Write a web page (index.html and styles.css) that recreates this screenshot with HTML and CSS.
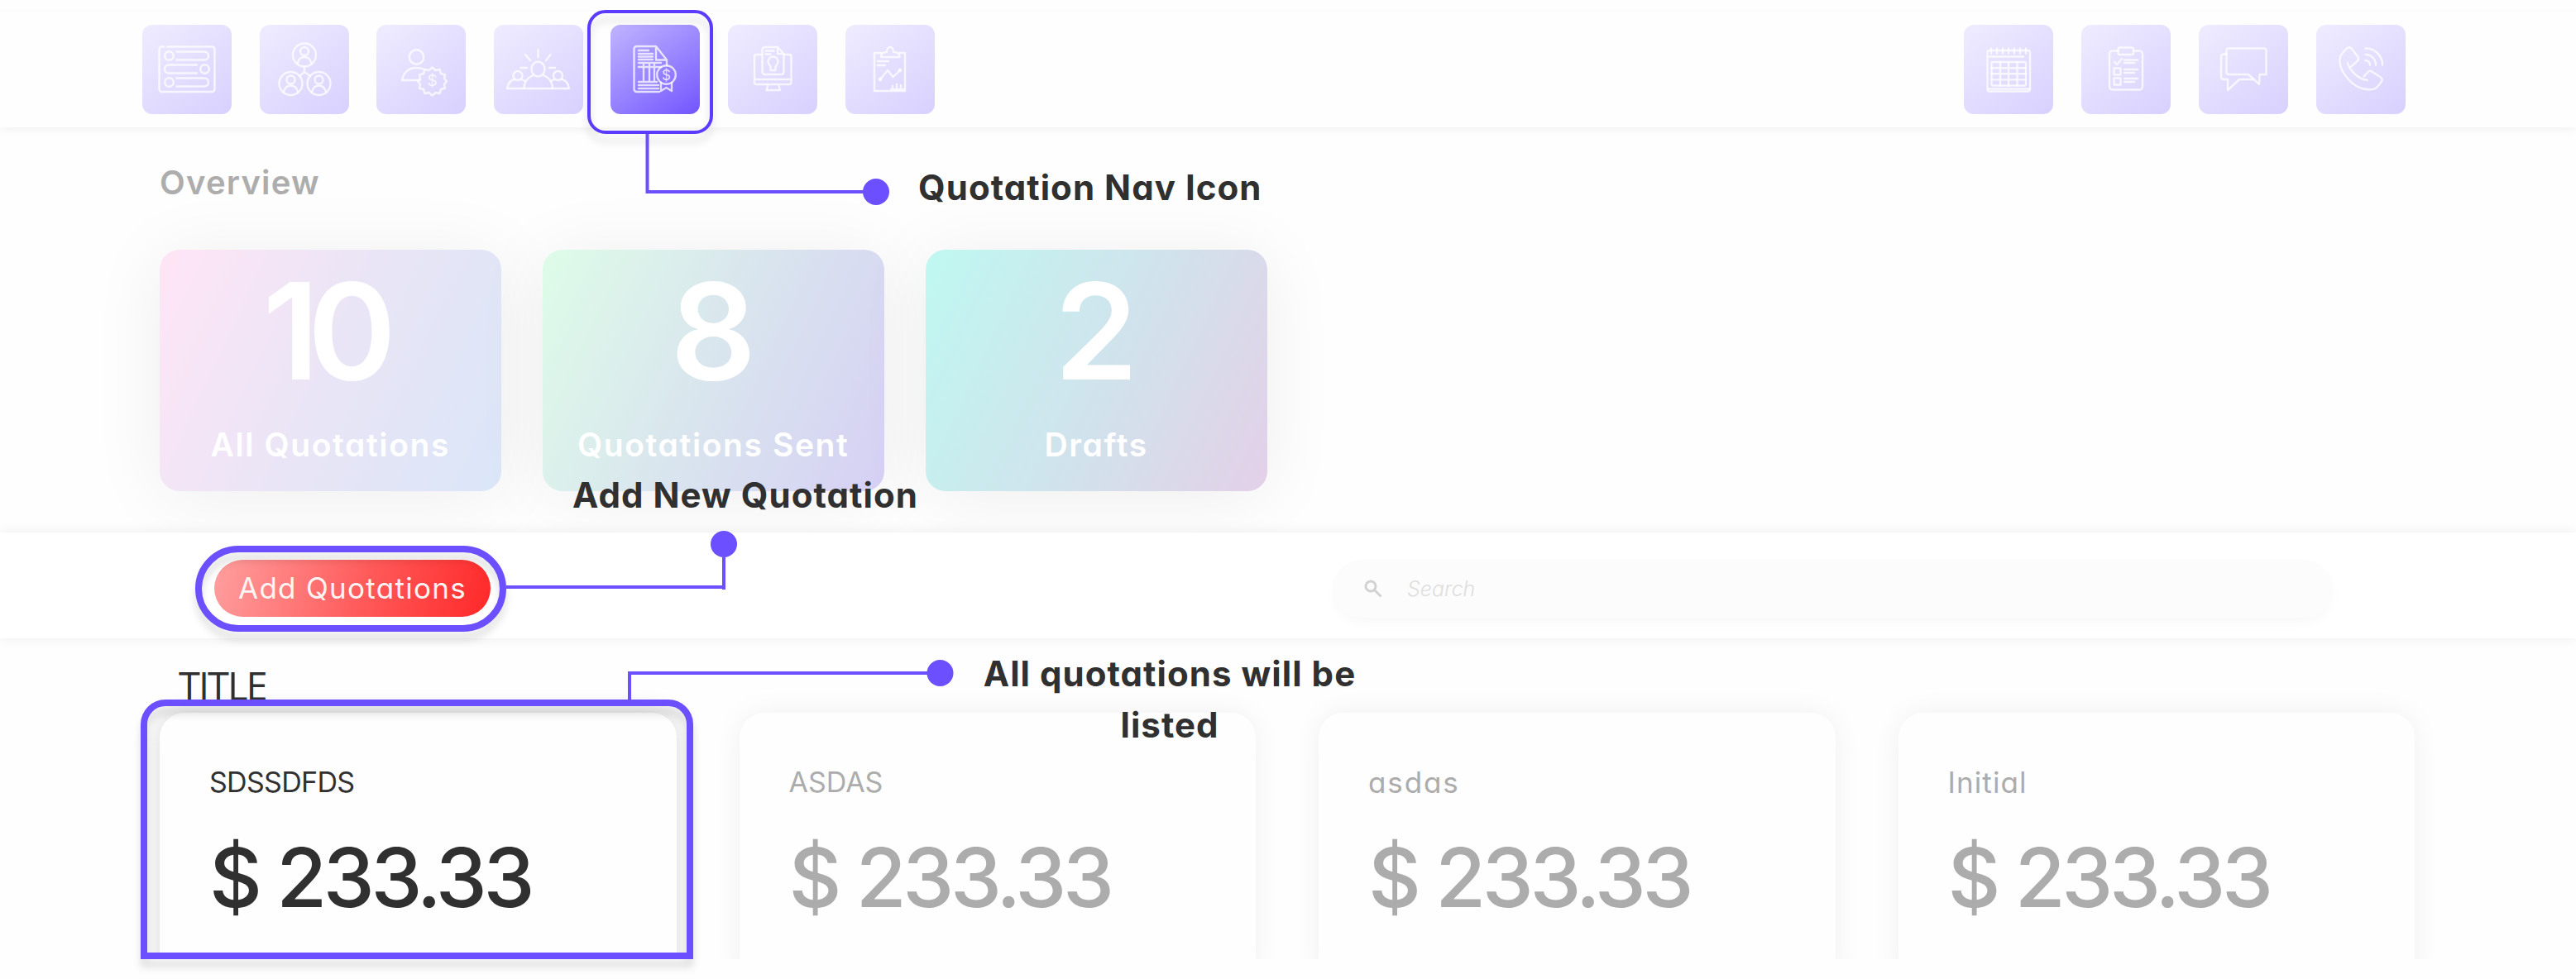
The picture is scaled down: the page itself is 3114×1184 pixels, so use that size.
FILE: index.html
```html
<!DOCTYPE html>
<html lang="en">
<head>
<meta charset="utf-8">
<title>Quotations</title>
<link rel="stylesheet" href="styles.css">
</head>
<body>
<div class="page">
  <nav class="nav">
    <div class="nav-group">
      <a class="tile"><svg viewBox="0 0 108 108"><path d="M26 26.500H23.500a3 3 0 0 0-3 3V78a3 3 0 0 0 3 3h61a3 3 0 0 0 3-3V29.500a3 3 0 0 0-3-3H30"/><circle cx="32.500" cy="37.500" r="5.300"/><path d="M41.500 32.500H75a5 5 0 0 1 0 10H41.500M66 48.500H32a5 5 0 0 0 0 10h34M41.500 64.500H75a5 5 0 0 1 0 10H41.500"/><circle cx="75.500" cy="53.500" r="5.300"/><circle cx="32.500" cy="69.500" r="5.300"/></svg></a>
      <a class="tile"><svg viewBox="0 0 108 108"><circle cx="54" cy="36.500" r="14"/><circle cx="54" cy="32" r="5"/><path d="M45.500 47c1-5 4-8 8.500-8s7.500 3 8.500 8"/><g transform="translate(-16.500 34.500)"><circle cx="54" cy="36.500" r="14"/><circle cx="54" cy="32" r="5"/><path d="M45.500 47c1-5 4-8 8.500-8s7.500 3 8.500 8"/></g><g transform="translate(17.500 34.500)"><circle cx="54" cy="36.500" r="14"/><circle cx="54" cy="32" r="5"/><path d="M45.500 47c1-5 4-8 8.500-8s7.500 3 8.500 8"/></g><path d="M54 50.500V57l-6 5M54 57l7 5"/></svg></a>
      <a class="tile"><svg viewBox="0 0 108 108"><circle cx="48.500" cy="39" r="8.700"/><path d="M53 67H31c1.500-9 8-15 17-15 4 0 7 .5 10 2"/><path d="M67.500 51.500l4 3.500 5-1 1.500 5 5 1.500-1 4.500 3 3-3 4 1 4.500-5 1.500-1.500 5-5-1-4 3.500-4-3.500-5 1-1.500-5-5-1.500 1-4.500-3-4 3-3-1-4.500 5-1.500 1.500-5 5 1z"/><text x="67.500" y="74" font-size="19">$</text></svg></a>
      <a class="tile"><svg viewBox="0 0 108 108"><ellipse cx="53.500" cy="53.500" rx="8" ry="9"/><path d="M36.500 77c0-8 4-13 11-16M71 77c0-8-4-13-11-16"/><circle cx="29" cy="61.500" r="5.500"/><circle cx="77.500" cy="61.500" r="5.500"/><path d="M16 77c1-6 4-10 9-11M33 66l5 2M91 77c-1-6-4-10-9-11M73.500 66l-5 2M16 77h75M53.500 30v9M38 36l6 7M68.500 36l-5.500 7M32.500 52H40M67 52h7"/></svg></a>
      <a class="tile tile-active"><svg viewBox="0 0 108 108"><path d="M59 81H31.500a3 3 0 0 1-3-3V29a3 3 0 0 1 3-3H55l13 16.500V49M55 26v16.500h13M34 31h12M34 35h17M34 38.500h17M34 42h17M34 46h27M34 51h27M34 69h22M34 73h24M34 77h24M40 46v23M47 46v23M53 46v23"/><circle cx="67.500" cy="60.500" r="11.300"/><path d="M61 70v10l6.500-4 6.500 4V70"/><text x="67.500" y="66.500" font-size="17">$</text></svg></a>
      <a class="tile"><svg viewBox="0 0 108 108"><path d="M41 36h-6.500a2.500 2.500 0 0 0-2.500 2.500v31a2.500 2.500 0 0 0 2.500 2.500H74a2.500 2.500 0 0 0 2.500-2.500v-31A2.500 2.500 0 0 0 74 36h-6.500M32 66h44.500M48.500 72l-2 7H63l-2-7"/><path d="M41.500 30a3 3 0 0 1 3-3H60l7.500 8v22a3 3 0 0 1-3 3h-20a3 3 0 0 1-3-3zM60 27v8h7.500M45.500 31.500h10M45.500 35.500h6"/><path d="M51.500 51c0-2-3-3-3-6.500a6 6 0 0 1 12 0c0 3.500-3 4.500-3 6.500v4h-6z"/></svg></a>
      <a class="tile"><svg viewBox="0 0 108 108"><path d="M43 34h-8v46h37V34h-7"/><path d="M43 39c0-4 2.500-6 7-6 0-8 8-8 8 0 4.500 0 7.500 2 7.500 6zM39 44h13M39 49h9M42 66l9-11 6.500 8L66 55M55 78h15M57 78v-4M62 78v-6M67 78v-5"/><circle cx="42" cy="66" r="1.200"/><circle cx="66" cy="55" r="1.200"/></svg></a>
    </div>
    <div class="nav-group">
      <a class="tile"><svg viewBox="0 0 108 108"><rect x="28.500" y="31" width="51.500" height="49.500" rx="2.500"/><path d="M31 38.500h41M30 77.500h49M33 28.500v6M40 28.500v6M47 28.500v6M54 28.500v6M61 28.500v6M68 28.500v6M75 28.500v6"/><rect x="33.500" y="45" width="41.500" height="28.500" rx="1.500"/><path d="M33.500 52.200H75M33.500 59.300H75M33.500 66.400H75M44 45v28.500M54 45v28.500M64.500 45v28.500"/></svg></a>
      <a class="tile"><svg viewBox="0 0 108 108"><path d="M44.500 31.500h-7a3.500 3.500 0 0 0-3.500 3.500v40a3.500 3.500 0 0 0 3.500 3.500h33A3.500 3.500 0 0 0 74 75V35a3.500 3.500 0 0 0-3.500-3.500H63"/><rect x="44.500" y="27.500" width="18.500" height="8.500" rx="2"/><path d="M40 45l3 3 6-7M52 42.500h16M52 46h12M52 54h16M52 58h12M52 65h16M52 69h12"/><rect x="39.500" y="52.500" width="8" height="8"/><rect x="39.500" y="64.500" width="8" height="8"/></svg></a>
      <a class="tile"><svg viewBox="0 0 108 108"><path d="M60 60H36a2.500 2.500 0 0 1-2.500-2.500V31a2.500 2.500 0 0 1 2.500-2.500h43a2.500 2.500 0 0 1 2.500 2.500v29H73.500L73 72 60 60"/><path d="M33.500 35.500H30a3 3 0 0 0-3 3V63a3 3 0 0 0 3 3h5v13l14-13h17"/></svg></a>
      <a class="tile"><svg viewBox="0 0 108 108"><path d="M38 46c2 9 13 20 24 21M41.500 51l8-7c2-1.500 2-3 1-5L43 29c-1.500-2-4-2.500-6-.5l-6 6.500c-2 2.500-3 6-2.500 11 1.500 13 16 29 29 31.500 5 1 11 1 14-.5 2-1.500 5-5 7.500-8.500 1.500-2 .5-4-1-5L68 57c-2-1.500-4-1.500-5.500 0l-5 5.500"/><path d="M59.500 28.500a20 20 0 0 1 20.500 20M59.500 36a12.500 12.500 0 0 1 12.500 12.500M59.500 43a5.500 5.500 0 0 1 5.500 5.500"/></svg></a>
    </div>
  </nav>

  <section class="overview">
    <h2 class="overview-title">Overview</h2>
    <div class="stats">
      <div class="stat stat-all"><b>10</b><em>All Quotations</em></div>
      <div class="stat stat-sent"><b>8</b><em>Quotations Sent</em></div>
      <div class="stat stat-draft"><b>2</b><em>Drafts</em></div>
    </div>
  </section>

  <section class="toolbar">
    <button class="add">Add Quotations</button>
    <label class="search">
      <svg class="search-icon" viewBox="0 0 22 22"><circle cx="8" cy="8" r="6"/><path d="M12.500 12.500l8 8"/></svg>
      <span>Search</span>
    </label>
  </section>

  <section class="list">
    <h3 class="list-title">TITLE</h3>
    <div class="quotes">
      <article class="quote quote-first"><p class="name name-caps">SDSSDFDS</p><p class="price">$ 233.33</p></article>
      <article class="quote"><p class="name name-short">ASDAS</p><p class="price">$ 233.33</p></article>
      <article class="quote"><p class="name name-lower">asdas</p><p class="price">$ 233.33</p></article>
      <article class="quote"><p class="name name-mixed">Initial</p><p class="price">$ 233.33</p></article>
    </div>
  </section>

  <div class="frame frame-nav"></div>
  <div class="frame frame-add"></div>
  <div class="frame frame-quote"></div>
  <svg class="connectors" viewBox="0 0 3114 1184">
    <path d="M782.500 162V232H1050M612 710H875V674M875 710v3M761 846V814H1130"/>
    <circle cx="1059" cy="232" r="16"/><circle cx="875" cy="658" r="16"/><circle cx="1136.500" cy="814" r="16"/>
  </svg>
  <p class="note note-nav">Quotation Nav Icon</p>
  <p class="note note-add">Add New Quotation</p>
  <p class="note note-list">All quotations will be<br>listed</p>
</div>
</body>
</html>
```
FILE: styles.css
```css
* { box-sizing: border-box; }
body { margin: 0; background: #fefefe; font-family: Inter, "Noto Sans", sans-serif; font-feature-settings: "cv11"; color: #303030; }
h2, h3, p { margin: 0; font-weight: 400; }
.page { position: relative; width: 3114px; height: 1184px; overflow: hidden; display: flex; flex-direction: column; }

.nav { height: 154px; flex: none; display: flex; justify-content: space-between; padding: 30px 206px 0 172px; box-shadow: 0 2px 12px rgba(0, 0, 0, .06); background: linear-gradient(#fefefe 12px, #fbfbfb 12px, #fbfbfb 14px, #fefefe 14px); }
.nav-group { display: flex; gap: 33.600px; }
.nav-group + .nav-group { gap: 34px; }
.tile { width: 108px; height: 107.500px; border-radius: 12px; background: linear-gradient(145deg, #efecff, #e3defe 50%, #d8d0ff); }
.tile-active { background: linear-gradient(145deg, #c1b4ff, #9a86ff 50%, #7355ff); }
.tile svg { display: block; width: 108px; height: 108px; fill: none; stroke: #fff; stroke-opacity: .75; stroke-width: 2.400; stroke-linejoin: round; stroke-linecap: round; }
.tile text { fill: #fff; fill-opacity: .8; stroke: none; text-anchor: middle; font-family: Inter, sans-serif; }

.overview { height: 490px; flex: none; padding: 0 193px; }
.overview-title { height: 148px; padding-top: 42px; font-size: 40px; line-height: 50px; font-weight: 600; letter-spacing: 1.200px; color: #adadad; }
.stats { display: flex; gap: 50.500px; }
.stat { width: 412.500px; height: 292px; border-radius: 24px; display: flex; flex-direction: column; align-items: center; color: #fff; box-shadow: 0 6px 90px rgba(0, 0, 0, .065); }
.stat b { height: 196px; line-height: 196px; font-size: 162px; font-weight: 600; }
.stat em { font-style: normal; font-size: 39px; font-weight: 600; line-height: 80px; letter-spacing: 1.600px; }
.stat-all { background: linear-gradient(115deg, #ffe5f6, #e9e5f6 50%, #dae6f8); }
.stat-all b { letter-spacing: -14px; padding-right: 16px; }
.stat-sent { background: linear-gradient(115deg, #defce8, #d9e5ee 50%, #d6d0f4); }
.stat-draft { background: linear-gradient(115deg, #bff8f1, #d1e2ec 55%, #e3d0e8); }

.toolbar { position: relative; height: 128px; flex: none; display: flex; justify-content: space-between; padding: 33px 294px 0 259px; background: rgba(255, 255, 255, .8); box-shadow: 0 0 16px rgba(0, 0, 0, .07); }
.add { width: 334px; height: 69px; border: 0; padding: 0; border-radius: 35px; color: #fff3f3; font: 400 35px/69px Inter, sans-serif; font-feature-settings: "cv11"; letter-spacing: 1.300px; background: linear-gradient(105deg, #ff9f9f, #ff5959 55%, #ff2828); }
.search { width: 1209px; height: 70px; border-radius: 35px; background: #fcfcfc; box-shadow: 0 8px 12px rgba(0, 0, 0, .025); display: flex; align-items: center; gap: 30px; padding: 0 0 0 38px; font-size: 25px; font-style: italic; font-weight: 300; color: #dedede; }
.search-icon { width: 22px; height: 22px; fill: none; stroke: #d2d2d2; stroke-width: 3; }

.list { height: 388px; flex: none; overflow: hidden; padding: 0 193px; }
.list-title { height: 90px; padding: 24px 0 0 23px; font-family: "Open Sans", sans-serif; font-size: 47px; line-height: 66px; letter-spacing: -2px; }
.quotes { display: flex; gap: 76px; }
.quote { width: 624.500px; flex: none; height: 340px; border-radius: 30px; padding: 55px 60px; background: #fefefe; box-shadow: 0 0 34px rgba(0, 0, 0, .06); color: #acacac; }
.quote-first { color: #303030; box-shadow: 0 0 30px rgba(0, 0, 0, .16); }
.name { font-size: 34px; line-height: 58px; }
.name-caps { letter-spacing: -.700px; }
.name-lower { font-size: 35px; letter-spacing: 1.900px; }
.name-mixed { font-size: 35px; letter-spacing: 1.100px; }
.price { font-size: 99px; line-height: 120px; font-weight: 500; margin-top: 26px; letter-spacing: -4.500px; }

.frame { position: absolute; border: 8px solid #6c50ff; filter: drop-shadow(0 10px 5px rgba(0, 0, 0, .12)); }
.frame-nav { left: 710px; top: 12px; width: 152px; height: 150px; border: 4px solid #5b3cff; border-radius: 22px; }
.frame-add { left: 236px; top: 660px; width: 376px; height: 104px; border-radius: 52px; }
.frame-quote { left: 170px; top: 846px; width: 668px; height: 314px; border-radius: 30px 30px 0 0; }
.connectors { position: absolute; left: 0; top: 0; width: 3114px; height: 1184px; fill: #6c50ff; }
.connectors path { fill: none; stroke: #6c50ff; stroke-width: 4; }

.note { position: absolute; font-size: 42px; line-height: 62px; font-weight: 700; letter-spacing: 1.050px; text-align: center; white-space: nowrap; }
.note-nav { left: 1110px; top: 196px; }
.note-add { left: 692px; top: 568px; }
.note-list { left: 1187px; top: 784px; width: 454px; }
```
